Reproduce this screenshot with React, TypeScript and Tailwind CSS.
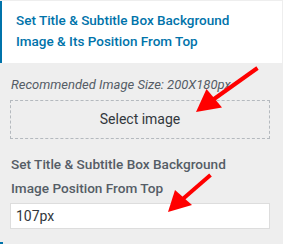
import React from "react";

export default function App() {
	return (
		<div className="relative w-[283px] h-[244px] overflow-hidden bg-[#eeeeee] font-['Roboto',sans-serif]">
			<div className="mt-px mr-px bg-white border-l-2 border-[#0073aa] pl-[14px] pr-[30px] pt-[9px] pb-[11px]">
				<h3 className="text-[13.5px] leading-[21px] font-medium text-[#0073aa]">
					Set Title &amp; Subtitle Box Background Image &amp; Its Position From Top
				</h3>
			</div>

			<div className="px-[10px]">
				<p className="mt-[13px] pl-px text-[13px] leading-[18px] italic text-[#555d66]">
					Recommended Image Size: 200X180px
				</p>
				<button className="mt-[6px] w-[260px] h-[39px] border border-dashed border-[#b4b9be] text-[14px] text-[#32373c]">
					Select image
				</button>
				<label className="block mt-[13px] pl-px pr-[30px] text-[13.6px] leading-[24px] font-medium text-[#555d66]">
					Set Title &amp; Subtitle Box Background Image Position From Top
				</label>
				<input
					className="mt-[3px] w-[260px] h-[26px] bg-white border border-[#dddddd] px-[5px] text-[14px] text-[#32373c] outline-none"
					defaultValue="107px"
				/>
			</div>

			<div className="absolute left-0 bottom-0 w-[3px] h-[2px] bg-[#0073aa]" />

			{/* annotation arrows */}
			<svg className="absolute inset-0 pointer-events-none" width="283" height="244">
				<line x1="257.5" y1="68" x2="207" y2="104" stroke="#ff0000" strokeWidth="4" />
				<polygon points="196,112 206.5,89 222,107.5" fill="#ff0000" />
				<line x1="210.5" y1="175" x2="177" y2="204" stroke="#ff0000" strokeWidth="4" />
				<polygon points="168,212 175,190 192,205" fill="#ff0000" />
			</svg>
		</div>
	);
}
